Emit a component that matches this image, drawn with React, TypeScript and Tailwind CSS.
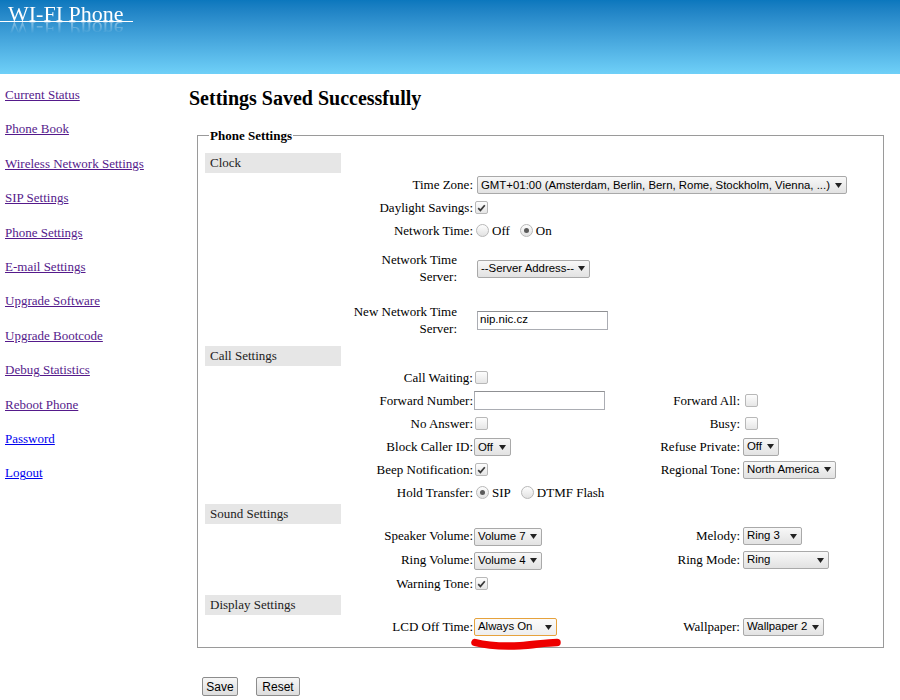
import React from "react";

type NavLink = { name: string; visited: boolean };

const navLinks: NavLink[] = [
  { name: "Current Status", visited: true },
  { name: "Phone Book", visited: true },
  { name: "Wireless Network Settings", visited: true },
  { name: "SIP Settings", visited: true },
  { name: "Phone Settings", visited: true },
  { name: "E-mail Settings", visited: true },
  { name: "Upgrade Software", visited: true },
  { name: "Upgrade Bootcode", visited: true },
  { name: "Debug Statistics", visited: true },
  { name: "Reboot Phone", visited: true },
  { name: "Password", visited: false },
  { name: "Logout", visited: false },
];

function Select({ value, width, focus }: { value: string; width: string; focus?: boolean }) {
  return (
    <span
      className={`inline-flex h-[18px] items-center justify-between rounded-[2px] border pl-[3px] pr-[4px] font-['Liberation_Sans',Arial,sans-serif] text-[11.4px] leading-none text-black ${width} ${
        focus
          ? "border-[#e6a23c] bg-linear-to-b from-[#fbfbfb] to-[#eeeeee]"
          : "border-[#a9a9a9] bg-linear-to-b from-[#f8f8f8] to-[#e2e2e2]"
      }`}
    >
      <span className="whitespace-nowrap">{value}</span>
      <svg width="7" height="5" viewBox="0 0 7 5" className="ml-[3px] shrink-0">
        <path d="M0 0h7L3.5 5z" fill="#222" />
      </svg>
    </span>
  );
}

function Check({ on }: { on?: boolean }) {
  return (
    <span className="ml-[2px] inline-flex h-[13px] w-[13px] items-center justify-center rounded-[2px] border border-[#b8b8b8] bg-linear-to-b from-[#fdfdfd] to-[#e6e6e6]">
      {on && (
        <svg width="9" height="8" viewBox="0 0 9 8">
          <path d="M1.2 4.2l2.2 2.2L7.8 1.2" stroke="#3a3a3a" strokeWidth="1.7" fill="none" />
        </svg>
      )}
    </span>
  );
}

function Radio({ on }: { on?: boolean }) {
  return (
    <span className="inline-flex h-[13px] w-[13px] items-center justify-center rounded-full border border-[#b8b8b8] bg-linear-to-b from-[#fdfdfd] to-[#e2e2e2]">
      {on && <span className="h-[5px] w-[5px] rounded-full bg-[#5a5a5a]" />}
    </span>
  );
}

function TextBox({ value = "", className = "" }: { value?: string; className?: string }) {
  return (
    <span
      className={`inline-flex h-[19px] w-[131px] items-center border border-[#abadb3] border-t-[#8f9093] bg-white pl-[2px] font-['Liberation_Sans',Arial,sans-serif] text-[11.5px] text-black ${className}`}
    >
      {value}
    </span>
  );
}

function Button({ children, width }: { children: React.ReactNode; width: string }) {
  return (
    <button
      className={`h-[19px] rounded-[2px] border border-[#8c8c8c] bg-linear-to-b from-[#f6f6f6] to-[#dddddd] font-['Liberation_Sans',Arial,sans-serif] text-[12px] leading-none text-black ${width}`}
    >
      {children}
    </button>
  );
}

function SectionHead({ title }: { title: string }) {
  return <div className="h-[20px] w-[136px] bg-[#e6e6e6] pl-[5px] leading-[20px] text-[#222]">{title}</div>;
}

function Row({
  label,
  children,
  rightLabel,
  right,
  height = "h-[23px]",
  tall,
}: {
  label: React.ReactNode;
  children: React.ReactNode;
  rightLabel?: string;
  right?: React.ReactNode;
  height?: string;
  tall?: boolean;
}) {
  return (
    <div className={`flex items-center pl-[136px] ${tall ? "h-[52px]" : height}`}>
      <div className={`w-[132px] shrink-0 text-right ${tall ? "pr-[16px] leading-[17px]" : ""}`}>{label}</div>
      <div className={`flex items-center ${rightLabel ? "w-[147px] shrink-0" : ""}`}>{children}</div>
      {rightLabel && (
        <>
          <div className="w-[120px] shrink-0 text-right">{rightLabel}</div>
          <div className="ml-[3px] flex items-center">{right}</div>
        </>
      )}
    </div>
  );
}

export default function App() {
  return (
    <div className="min-h-[700px] bg-white font-['Liberation_Serif','Times_New_Roman',serif] text-[13px] text-black">
      {/* Banner with the mirrored logo */}
      <header className="h-[74px] bg-linear-to-b from-[#0b77bd] to-[#6fd0f8]">
        <div className="w-[133px] pt-[3px]">
          <div className="pl-[8px] text-[22px] leading-[22px] text-white [-webkit-box-reflect:below_-7px_linear-gradient(transparent_30%,rgba(255,255,255,0.6))]">
            WI-FI Phone
          </div>
          <div className="-mt-[4px] h-px bg-white" />
        </div>
      </header>

      <div className="flex">
        {/* Menu */}
        <nav className="w-[189px] shrink-0 pl-[5px] pt-[4px]">
          {navLinks.map((l) => (
            <a
              key={l.name}
              href="#"
              className={`block w-fit leading-[34.4px] underline ${l.visited ? "text-[#551a8b]" : "text-[#0000ee]"}`}
            >
              {l.name}
            </a>
          ))}
        </nav>

        <main className="flex-1 pt-[12px]">
          <h2 className="text-[20px] font-bold leading-[24px]">Settings Saved Successfully</h2>

          <fieldset className="mt-[18px] ml-[8px] w-[687px] border border-[#9a9a9a] pt-[10px] pb-[8px] pl-[7px]">
            <legend className="ml-[4px] px-[1px] font-bold leading-[15px]">Phone Settings</legend>

            <SectionHead title="Clock" />
            <Row label="Time Zone:">
              <span className="ml-[4px]">
                <Select width="min-w-[370px]" value="GMT+01:00 (Amsterdam, Berlin, Bern, Rome, Stockholm, Vienna, ...)" />
              </span>
            </Row>
            <Row label="Daylight Savings:">
              <Check on />
            </Row>
            <Row label="Network Time:">
              <span className="ml-[3px] flex items-center">
                <Radio />
                <span className="ml-[3px] mr-[10px]">Off</span>
                <Radio on />
                <span className="ml-[3px]">On</span>
              </span>
            </Row>
            <Row
              tall
              label={
                <>
                  Network Time
                  <br />
                  Server:
                </>
              }
            >
              <span className="ml-[4px]">
                <Select width="min-w-[113px]" value="--Server Address--" />
              </span>
            </Row>
            <Row
              tall
              label={
                <>
                  New Network Time
                  <br />
                  Server:
                </>
              }
            >
              <TextBox value="nip.nic.cz" className="ml-[4px]" />
            </Row>

            <SectionHead title="Call Settings" />
            <Row label="Call Waiting:">
              <Check />
            </Row>
            <Row label="Forward Number:" rightLabel="Forward All:" right={<Check />}>
              <TextBox className="ml-[1px]" />
            </Row>
            <Row label="No Answer:" rightLabel="Busy:" right={<Check />}>
              <Check />
            </Row>
            <Row
              label="Block Caller ID:"
              rightLabel="Refuse Private:"
              right={<Select width="min-w-[36px]" value="Off" />}
            >
              <span className="ml-[1px]">
                <Select width="min-w-[37px]" value="Off" />
              </span>
            </Row>
            <Row
              label="Beep Notification:"
              rightLabel="Regional Tone:"
              right={<Select width="min-w-[93px]" value="North America" />}
            >
              <Check on />
            </Row>
            <Row label="Hold Transfer:">
              <span className="ml-[3px] flex items-center">
                <Radio on />
                <span className="ml-[3px] mr-[10px]">SIP</span>
                <Radio />
                <span className="ml-[3px]">DTMF Flash</span>
              </span>
            </Row>

            <SectionHead title="Sound Settings" />
            <Row
              height="h-[24px]"
              label="Speaker Volume:"
              rightLabel="Melody:"
              right={<Select width="min-w-[59px]" value="Ring 3" />}
            >
              <span className="ml-[1px]">
                <Select width="min-w-[68px]" value="Volume 7" />
              </span>
            </Row>
            <Row
              height="h-[24px]"
              label="Ring Volume:"
              rightLabel="Ring Mode:"
              right={<Select width="min-w-[86px]" value="Ring" />}
            >
              <span className="ml-[1px]">
                <Select width="min-w-[68px]" value="Volume 4" />
              </span>
            </Row>
            <Row label="Warning Tone:">
              <Check on />
            </Row>

            <SectionHead title="Display Settings" />
            <Row
              height="h-[24px]"
              label="LCD Off Time:"
              rightLabel="Wallpaper:"
              right={<Select width="min-w-[81px]" value="Wallpaper 2" />}
            >
              <span className="relative ml-[1px] inline-flex">
                <Select width="min-w-[83px]" value="Always On" focus />
                {/* red pen mark under the LCD select */}
                <svg width="92" height="13" viewBox="0 0 92 13" className="absolute top-[19px] -left-[4px]">
                  <path
                    d="M5 5.5C18 9 34 9.5 50 8.8C64 8 76 5.5 87 5.5"
                    stroke="#ee0000"
                    strokeWidth="7.5"
                    strokeLinecap="round"
                    fill="none"
                  />
                </svg>
              </span>
            </Row>
          </fieldset>

          <div className="mt-[29px] ml-[13px] flex gap-[18px]">
            <Button width="w-[36px]">Save</Button>
            <Button width="w-[44px]">Reset</Button>
          </div>
        </main>
      </div>
    </div>
  );
}
